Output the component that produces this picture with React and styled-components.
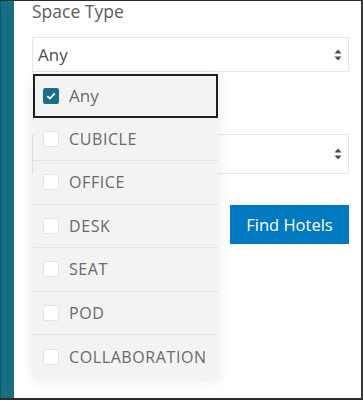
import styled, { createGlobalStyle } from 'styled-components';

const GlobalStyle = createGlobalStyle`
  html, body {
    margin: 0;
    padding: 0;
    background: #fff;
  }
  body {
    font-family: "Open Sans", Lato, sans-serif;
  }
`;

const Frame = styled.div`
  display: flex;
  width: 363px;
  height: 400px;
  box-sizing: border-box;
  border-top: 1px solid #2b2b2b;
  border-right: 2px solid #3a3a3a;
  border-bottom: 2px solid #2b2b2b;
  background: #fff;
  overflow: hidden;
`;

const Sidebar = styled.div`
  width: 14px;
  flex: none;
  background: #176f83;
  border-left: 1px solid #0f5566;
  box-sizing: border-box;
`;

const Content = styled.div`
  flex: 1;
  display: flex;
  flex-direction: column;
  padding: 0 12px 0 18px;
`;

const Field = styled.div`
  position: relative;
  display: flex;
  flex-direction: column;
  margin-bottom: ${(p) => p.$gap || 0}px;
`;

const Label = styled.label`
  height: 20px;
  font-size: 17.5px;
  line-height: 20px;
  color: #5c5c5c;
  margin-bottom: 16px;
`;

const Select = styled.div`
  display: flex;
  align-items: center;
  justify-content: space-between;
  height: ${(p) => p.$height}px;
  box-sizing: border-box;
  border: 1px solid #e6e6e6;
  padding: 0 6px 0 5px;
  font-size: 17px;
  color: #4c4c4c;
`;

const Menu = styled.ul`
  position: absolute;
  top: 73px;
  left: 1px;
  width: 185px;
  margin: 0;
  padding: 0;
  list-style: none;
  background: #f3f3f3;
  box-shadow: 0 2px 12px rgba(0, 0, 0, 0.09);
  z-index: 2;
`;

const Option = styled.li`
  display: flex;
  align-items: center;
  gap: 10px;
  height: 43.5px;
  box-sizing: border-box;
  padding-left: ${(p) => (p.$focused ? 8 : 10)}px;
  border: ${(p) => (p.$focused ? '2px solid #1e1e1e' : 'none')};
  border-bottom: ${(p) => (p.$focused ? '2px solid #1e1e1e' : '1px solid #e2e2e2')};
  font-size: ${(p) => (p.$upper ? 16 : 17)}px;
  letter-spacing: ${(p) => (p.$upper ? 0.6 : 0)}px;
  color: #6a6a6a;
  white-space: nowrap;
  text-transform: ${(p) => (p.$upper ? 'uppercase' : 'none')};

  &:last-child {
    border-bottom: none;
  }
`;

const Box = styled.span`
  width: 16px;
  height: 16px;
  flex: none;
  box-sizing: border-box;
  border-radius: 2px;
  display: flex;
  align-items: center;
  justify-content: center;
  background: ${(p) => (p.$checked ? '#196f85' : '#fff')};
  border: 1px solid ${(p) => (p.$checked ? '#196f85' : '#e4e4e4')};
`;

const Actions = styled.div`
  display: flex;
  justify-content: flex-end;
`;

const Button = styled.button`
  width: 119px;
  height: 39px;
  border: none;
  background: #0079c1;
  color: #fff;
  font-family: inherit;
  font-size: 16.5px;
  padding: 0;
`;

const Arrows = () => (
  <svg width="8" height="12" viewBox="0 0 8 12">
    <path d="M4 0.5 L7.5 4.5 H0.5 Z" fill="#4c4c4c" />
    <path d="M4 11.5 L7.5 7.5 H0.5 Z" fill="#4c4c4c" />
  </svg>
);

const Check = () => (
  <svg width="12" height="12" viewBox="0 0 12 12">
    <path d="M2.3 6.2 L4.9 8.6 L9.8 3.4" fill="none" stroke="#fff" strokeWidth="1.8" />
  </svg>
);

const types = ['Cubicle', 'Office', 'Desk', 'Seat', 'Pod', 'Collaboration'];

export default function App() {
  return (
    <>
      <GlobalStyle />
      <Frame>
        <Sidebar />
        <Content>
          <Field $gap={26}>
            <Label>Space Type</Label>
            <Select $height={35}>
              <span>Any</span>
              <Arrows />
            </Select>
            <Menu>
              <Option $focused>
                <Box $checked>
                  <Check />
                </Box>
                Any
              </Option>
              {types.map((t) => (
                <Option key={t} $upper>
                  <Box />
                  {t}
                </Option>
              ))}
            </Menu>
          </Field>
          <Field $gap={31}>
            <Label />
            <Select $height={40}>
              <span />
              <Arrows />
            </Select>
          </Field>
          <Actions>
            <Button>Find Hotels</Button>
          </Actions>
        </Content>
      </Frame>
    </>
  );
}
